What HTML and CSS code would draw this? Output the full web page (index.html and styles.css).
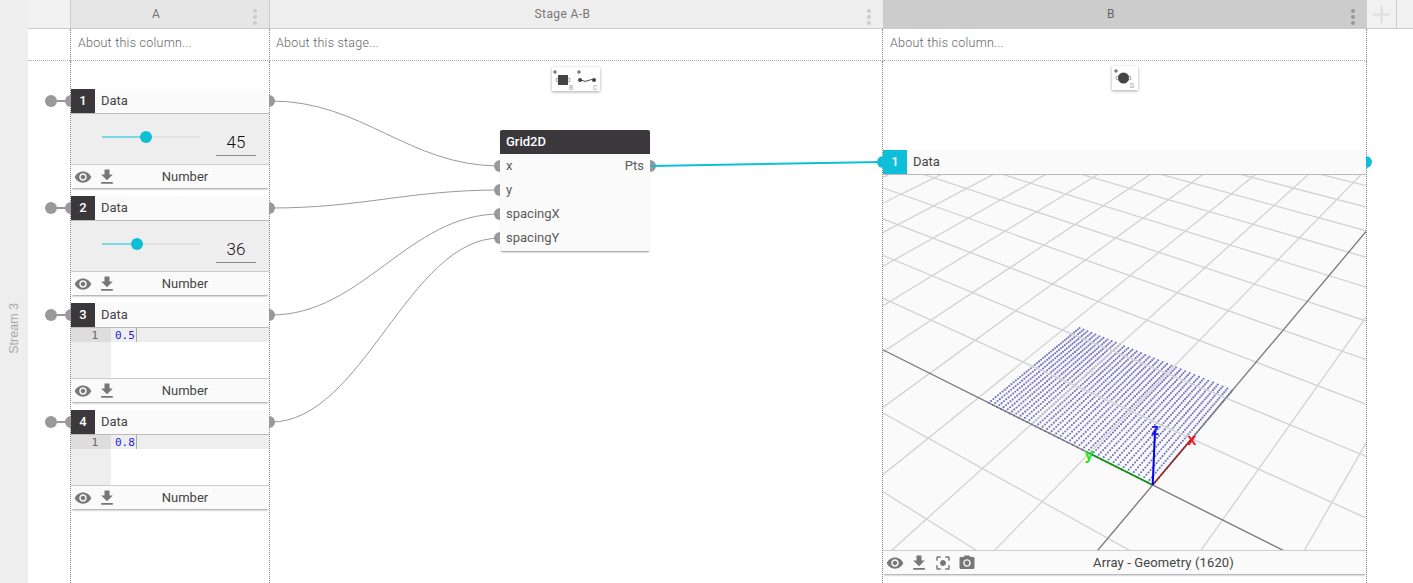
FILE: index.html
```html
<!DOCTYPE html>
<html lang="en">
<head>
<meta charset="utf-8">
<title>Stream 3</title>
<link rel="stylesheet" href="styles.css">
</head>
<body>
<svg width="0" height="0" class="defs">
  <symbol id="i-eye" viewBox="0 0 24 24"><path d="M12 4.5C7 4.5 2.73 7.61 1 12c1.73 4.39 6 7.5 11 7.5s9.27-3.11 11-7.5c-1.73-4.39-6-7.5-11-7.5zM12 17c-2.76 0-5-2.24-5-5s2.24-5 5-5 5 2.24 5 5-2.24 5-5 5zm0-8c-1.66 0-3 1.34-3 3s1.34 3 3 3 3-1.34 3-3-1.34-3-3-3z"/></symbol>
  <symbol id="i-down" viewBox="0 0 24 24"><path d="M19 9h-4V3H9v6H5l7 7 7-7zM5 18v2h14v-2H5z"/></symbol>
  <symbol id="i-focus" viewBox="0 0 24 24"><path d="M12 8c-2.21 0-4 1.79-4 4s1.79 4 4 4 4-1.79 4-4-1.79-4-4-4zm-7 7H3v4c0 1.1.9 2 2 2h4v-2H5v-4zM5 5h4V3H5c-1.1 0-2 .9-2 2v4h2V5zm14-2h-4v2h4v4h2V5c0-1.1-.9-2-2-2zm0 16h-4v2h4c1.1 0 2-.9 2-2v-4h-2v4z"/></symbol>
  <symbol id="i-cam" viewBox="0 0 24 24"><circle cx="12" cy="12" r="3.2"/><path d="M9 2L7.17 4H4c-1.1 0-2 .9-2 2v12c0 1.1.9 2 2 2h16c1.1 0 2-.9 2-2V6c0-1.1-.9-2-2-2h-3.17L15 2H9zm3 15c-2.76 0-5-2.24-5-5s2.24-5 5-5 5 2.24 5 5-2.24 5-5 5z"/></symbol>
</svg>
<div class="app">
  <aside class="stream"><span class="stream-label">Stream 3</span></aside>

  <div class="head head-gutter"></div>
  <div class="head head-a"><span class="head-title">A</span><span class="dots"><i></i><i></i><i></i></span></div>
  <div class="head head-stage"><span class="head-title">Stage A-B</span><span class="dots"><i></i><i></i><i></i></span></div>
  <div class="head head-b"><span class="head-title">B</span><span class="dots"><i></i><i></i><i></i></span></div>
  <div class="head head-plus"><svg width="17" height="17" viewBox="0 0 17 17"><path d="M7.5 0h2v7.5H17v2H9.5V17h-2V9.5H0v-2h7.5z"/></svg></div>
  <div class="head head-rest"></div>

  <div class="note note-gutter"></div>
  <div class="note note-col note-a">About this column...</div>
  <div class="note note-col note-stage">About this stage...</div>
  <div class="note note-col note-b">About this column...</div>
  <div class="note-empty"></div>
  <div class="note-empty"></div>

  <div class="body-gutter"></div>

  <section class="body body-a">
    <article class="node">
      <span class="pin"></span><span class="port port-l"></span><span class="port port-r"></span>
      <div class="node-head"><b class="badge">1</b><span class="node-title">Data</span></div>
      <div class="slider-body">
        <div class="slider"><div class="slider-fill" style="width:45%"><i class="thumb"></i></div></div>
        <div class="slider-value">45</div>
      </div>
      <div class="foot">
        <span class="foot-icon"><svg class="ic-eye"><use href="#i-eye"/></svg></span>
        <span class="foot-icon"><svg class="ic-down"><use href="#i-down"/></svg></span>
        <span class="foot-label">Number</span>
      </div>
    </article>
    <article class="node">
      <span class="pin"></span><span class="port port-l"></span><span class="port port-r"></span>
      <div class="node-head"><b class="badge">2</b><span class="node-title">Data</span></div>
      <div class="slider-body">
        <div class="slider"><div class="slider-fill" style="width:36%"><i class="thumb"></i></div></div>
        <div class="slider-value">36</div>
      </div>
      <div class="foot">
        <span class="foot-icon"><svg class="ic-eye"><use href="#i-eye"/></svg></span>
        <span class="foot-icon"><svg class="ic-down"><use href="#i-down"/></svg></span>
        <span class="foot-label">Number</span>
      </div>
    </article>
    <article class="node">
      <span class="pin"></span><span class="port port-l"></span><span class="port port-r"></span>
      <div class="node-head"><b class="badge">3</b><span class="node-title">Data</span></div>
      <div class="code-body">
        <div class="code-line"><span class="code-num">1</span><span class="code-val">0.5</span></div>
      </div>
      <div class="foot">
        <span class="foot-icon"><svg class="ic-eye"><use href="#i-eye"/></svg></span>
        <span class="foot-icon"><svg class="ic-down"><use href="#i-down"/></svg></span>
        <span class="foot-label">Number</span>
      </div>
    </article>
    <article class="node">
      <span class="pin"></span><span class="port port-l"></span><span class="port port-r"></span>
      <div class="node-head"><b class="badge">4</b><span class="node-title">Data</span></div>
      <div class="code-body">
        <div class="code-line"><span class="code-num">1</span><span class="code-val">0.8</span></div>
      </div>
      <div class="foot">
        <span class="foot-icon"><svg class="ic-eye"><use href="#i-eye"/></svg></span>
        <span class="foot-icon"><svg class="ic-down"><use href="#i-down"/></svg></span>
        <span class="foot-label">Number</span>
      </div>
    </article>
  </section>

  <section class="body body-stage">
    <div class="palette">
      <svg width="48" height="24" viewBox="0 0 48 24">
        <path class="pal-plus" d="M1 5h4M3 3v4M25 5h4M27 3v4"/>
        <circle class="pal-ring" cx="6" cy="13" r="2"/><circle class="pal-ring" cx="16" cy="13" r="2"/>
        <rect class="pal-fill" x="6" y="8" width="10" height="10"/>
        <text class="pal-text" x="17" y="23">B</text>
        <circle class="pal-fill" cx="28" cy="13" r="2"/><circle class="pal-fill" cx="42" cy="13" r="2"/>
        <path class="pal-wave" d="M28 13c3 0 4 2 7 1s4-2 7-1"/>
        <text class="pal-text" x="41" y="23">C</text>
      </svg>
    </div>
    <article class="block">
      <span class="port block-port block-p1"></span>
      <span class="port block-port block-p2"></span>
      <span class="port block-port block-p3"></span>
      <span class="port block-port block-p4"></span>
      <span class="port port-r block-out"></span>
      <div class="block-head">Grid2D</div>
      <div class="block-rows">
        <div class="block-row"><span>x</span><span>Pts</span></div>
        <div class="block-row"><span>y</span></div>
        <div class="block-row"><span>spacingX</span></div>
        <div class="block-row"><span>spacingY</span></div>
      </div>
    </article>
  </section>

  <section class="body body-b">
    <div class="palette palette-b">
      <svg width="26" height="24" viewBox="0 0 26 24">
        <path class="pal-plus" d="M2 5h4M4 3v4"/>
        <circle class="pal-ring" cx="6" cy="12" r="2"/><circle class="pal-ring" cx="17" cy="12" r="2"/>
        <ellipse class="pal-fill" cx="11.5" cy="12" rx="5.5" ry="5.5"/>
        <text class="pal-text" x="18" y="22">D</text>
      </svg>
    </div>
    <article class="node node-b">
      <span class="port port-l port-cyan"></span><span class="port port-r port-cyan"></span>
      <div class="node-head"><b class="badge badge-cyan">1</b><span class="node-title node-title-b">Data</span></div>
      <svg id="viewport" class="viewport" width="483" height="375" viewBox="883 175 483 375"></svg>
      <div class="foot">
        <span class="foot-icon"><svg class="ic-eye"><use href="#i-eye"/></svg></span>
        <span class="foot-icon"><svg class="ic-down"><use href="#i-down"/></svg></span>
        <span class="foot-icon"><svg class="ic-eye"><use href="#i-focus"/></svg></span>
        <span class="foot-icon"><svg class="ic-eye"><use href="#i-cam"/></svg></span>
        <span class="foot-label foot-label-wide">Array - Geometry (1620)</span>
      </div>
    </article>
  </section>

  <div class="body-rest"></div>
  <div class="body-rest"></div>

  <svg class="wires" width="1413" height="583" viewBox="0 0 1413 583">
    <path d="M271 101C363 101 408 166 500 166"/>
    <path d="M271 208C363 208 408 190 500 190"/>
    <path d="M271 315C363 315 408 214 500 214"/>
    <path d="M271 422C363 422 408 238 500 238"/>
    <path class="wire-on" d="M651 166L881 162"/>
  </svg>
</div>
<script src="viewport.js"></script>
</body>
</html>
```
FILE: styles.css
```css
* { box-sizing: border-box; }
html, body { margin: 0; height: 100%; background: #fff; overflow: hidden; }
body { font-family: Roboto, "Liberation Sans", sans-serif; color: #444; }
.defs { position: absolute; }

.app {
  position: relative;
  display: grid;
  grid-template-columns: 28px 42px 200px 613px 484px 30px 1fr;
  grid-template-rows: 29px 32px 1fr;
  width: 1413px;
  height: 583px;
  overflow: hidden;
}

.stream {
  grid-row: 1 / 4;
  background: #eee;
  display: flex;
  align-items: center;
  justify-content: center;
  padding-top: 73px;
}
.stream-label {
  writing-mode: vertical-rl;
  transform: rotate(180deg);
  font-family: "Liberation Sans", sans-serif;
  font-size: 12.5px;
  color: #aaa;
}

.head {
  display: flex;
  align-items: center;
  justify-content: center;
  padding: 0 28px 1px 0;
  position: relative;
  border-bottom: 1px solid #ccc;
  background: #eee;
  font-size: 12px;
  color: #777;
}
.head-gutter, .head-rest { background: #f1f1f1; }
.head-a { background: #e6e6e6; border-left: 1px solid #ccc; border-right: 1px solid #ccc; }
.head-stage { background: #eee; }
.head-b { background: #ccc; color: #666; }
.head-plus { padding: 0; border-right: 1px solid #ccc; background: #f1f1f1; }
.head-plus svg { fill: #ddd; }
.head-title { letter-spacing: 0.4px; }

.dots {
  position: absolute;
  right: 12px;
  top: 9px;
  display: flex;
  flex-direction: column;
  gap: 2px;
}
.dots i { width: 4px; height: 4px; border-radius: 50%; background: #ccc; }
.head-b .dots i { background: #999; }

.note { border-bottom: 1px dotted #aaa; }
.note-col {
  padding: 6px 0 0 7px;
  font-size: 12.5px;
  font-weight: 300;
  letter-spacing: 0.25px;
  color: #666;
  line-height: 16px;
  border-right: 1px dotted #888;
}
.note-a { border-left: 1px dotted #888; }
.note-stage { padding-left: 6px; }

.body { border-right: 1px dotted #888; position: relative; }
.body-a {
  border-left: 1px dotted #888;
  padding-top: 28px;
  display: flex;
  flex-direction: column;
  gap: 8px;
}

.node {
  position: relative;
  height: 99px;
  flex: none;
  background: #fafafa;
  box-shadow: 0 2px 2px -1px rgba(0, 0, 0, 0.4);
}
.node-head {
  height: 25px;
  display: flex;
  align-items: center;
  padding-bottom: 1px;
  background: #fafafa;
  border-bottom: 1px solid #bbb;
}
.badge {
  width: 24px;
  height: 24px;
  margin-bottom: -1px;
  background: #3a383a;
  color: #fff;
  font-size: 13px;
  font-weight: 500;
  line-height: 24px;
  text-align: center;
  flex: none;
}
.badge-cyan { background: #0fbfd8; }
.node-title { margin-left: 6px; font-size: 13px; color: #444; }

.pin {
  position: absolute;
  left: -26px;
  top: 6px;
  width: 12px;
  height: 12px;
  border-radius: 50%;
  background: #999;
}
.pin::after {
  content: "";
  position: absolute;
  left: 12px;
  top: 5px;
  width: 9px;
  height: 2px;
  background: #999;
}
.port {
  position: absolute;
  top: 6px;
  width: 6px;
  height: 12px;
  background: #999;
}
.port-l { left: -6px; border-radius: 6px 0 0 6px; }
.port-r { right: -6px; border-radius: 0 6px 6px 0; }
.port-cyan { background: #0fbfd8; }

.slider-body {
  height: 50px;
  background: #eee;
  display: flex;
  align-items: flex-start;
  padding-left: 31px;
}
.slider {
  width: 98px;
  height: 2px;
  margin-top: 22px;
  background: #e0e0e0;
}
.slider-fill { position: relative; height: 2px; background: #7dd8e6; }
.thumb {
  position: absolute;
  right: -6px;
  top: -5px;
  width: 12px;
  height: 12px;
  border-radius: 50%;
  background: #0fbfd8;
}
.slider-value {
  width: 40px;
  height: 42px;
  margin-left: 16px;
  padding-top: 16px;
  text-align: center;
  font-size: 17px;
  font-weight: 300;
  line-height: 24px;
  color: #111;
  border-bottom: 1px solid #888;
}

.code-body {
  height: 50px;
  background: linear-gradient(to right, #eee 40px, #fff 40px);
}
.code-line {
  height: 14px;
  display: flex;
  background: #eee;
  font-family: "DejaVu Sans Mono", monospace;
  font-size: 11px;
  line-height: 15px;
}
.code-num {
  width: 40px;
  padding-right: 13px;
  text-align: right;
  background: #ddd;
  color: #666;
}
.code-val {
  margin-left: 4px;
  padding-right: 1px;
  color: #22d;
  border-right: 1px solid #aaa;
}

.foot {
  height: 24px;
  display: flex;
  align-items: center;
  background: #fafafa;
  border-top: 1px solid #ccc;
}
.foot-icon {
  width: 24px;
  height: 23px;
  flex: none;
  display: flex;
  align-items: center;
  justify-content: center;
}
.foot-icon svg { fill: #777; }
.ic-eye { width: 18px; height: 18px; }
.ic-down { width: 20px; height: 20px; }
.foot-label {
  flex: 1;
  padding-right: 18px;
  text-align: center;
  font-size: 13px;
  color: #444;
}
.foot-label-wide { letter-spacing: 0.12px; }

.palette {
  width: 48px;
  height: 24px;
  margin: 6px auto 0;
  background: #fff;
  box-shadow: 0 1px 3px rgba(0, 0, 0, 0.35);
}
.palette svg { display: block; }
.palette-b { width: 26px; margin-top: 5px; }
.pal-plus { stroke: #555; stroke-width: 1; fill: none; }
.pal-ring { stroke: #888; stroke-width: 0.8; fill: none; }
.pal-fill { fill: #444; }
.pal-wave { stroke: #444; stroke-width: 1; fill: none; }
.pal-text { font-size: 6.5px; fill: #999; font-family: Roboto, sans-serif; }

.block {
  position: absolute;
  left: 230px;
  top: 69px;
  width: 150px;
  height: 121px;
  background: #fafafa;
  border-radius: 2px;
  box-shadow: 0 2px 2px -1px rgba(0, 0, 0, 0.45);
}
.block-head {
  height: 24px;
  padding-left: 6px;
  background: #3a383a;
  border-radius: 2px 2px 0 0;
  color: #fff;
  font-size: 13px;
  font-weight: 500;
  line-height: 24px;
}
.block-rows { display: flex; flex-direction: column; }
.block-row {
  height: 24px;
  padding: 0 6px;
  display: flex;
  justify-content: space-between;
  font-size: 13px;
  line-height: 24px;
  color: #5a5a5a;
}
.block-port { left: -6px; border-radius: 6px 0 0 6px; }
.block-p1 { top: 30px; }
.block-p2 { top: 54px; }
.block-p3 { top: 78px; }
.block-p4 { top: 102px; }
.block-out { top: 30px; }

.node-b { margin: 60px 0 0; height: 424px; }
.node-title-b { margin-left: 6px; }
.viewport { display: block; background: #fafafa; }

.wires {
  position: absolute;
  left: 0;
  top: 0;
  pointer-events: none;
  fill: none;
  stroke: #999;
  stroke-width: 1;
}
.wires .wire-on { stroke: #0fbfd8; stroke-width: 2; }

.grid-line { stroke: #d2d2d2; stroke-width: 1.3; }
.axis-line { stroke: #777; stroke-width: 1.3; }
.axis-x { stroke: #a02828; stroke-width: 1.5; }
.axis-y { stroke: #0a9a0a; stroke-width: 1.5; }
.axis-z { stroke: #0000f0; stroke-width: 2; }
.point { fill: #5a5ab8; opacity: 0.85; }
.axis-label { font-family: "Liberation Sans", sans-serif; font-weight: 700; font-size: 16px; text-anchor: middle; }
.label-x { fill: #f01818; }
.label-y { fill: #18e818; }
.label-z { fill: #1818f0; }
```
FILE: viewport.js
```js
(function () {
  var NS = 'http://www.w3.org/2000/svg';
  var svg = document.getElementById('viewport');

  // Ground plane (grid units) to screen pixels.
  function project(u, v) {
    var w = 1 + 0.07 * u + 0.048 * v;
    return [(1152.7 + 122.4 * u - 11.1 * v) / w, (485 - 15.6 * u - 10 * v) / w];
  }
  function add(name, attrs, parent) {
    var el = document.createElementNS(NS, name);
    for (var k in attrs) el.setAttribute(k, attrs[k]);
    (parent || svg).appendChild(el);
    return el;
  }
  function line(a, b, cls) {
    add('line', { x1: a[0], y1: a[1], x2: b[0], y2: b[1], 'class': cls });
  }

  // 45 x 36 = 1620 points: x at 0.5 spacing, y at 0.8 spacing, 10 to a grid cell.
  for (var i = 0; i < 45; i++) {
    for (var j = 0; j < 36; j++) {
      var p = project(i * 0.05, j * 0.08);
      add('circle', { cx: p[0], cy: p[1], r: 1.05, 'class': 'point' });
    }
  }

  var lo = -7, hi = 20;
  for (var n = lo; n <= hi; n++) {
    if (n === 0) continue;
    line(project(n, lo), project(n, hi), 'grid-line');
    line(project(lo, n), project(hi, n), 'grid-line');
  }
  line(project(0, lo), project(0, hi), 'axis-line');
  line(project(lo, 0), project(hi, 0), 'axis-line');

  line(project(0, 0), project(1, 0), 'axis-x');
  line(project(0, 0), project(0, 1), 'axis-y');
  line(project(0, 0), [1155, 431], 'axis-z');

  [['x', 1192, 444.5], ['y', 1089, 459.5], ['z', 1155, 434.5]].forEach(function (l) {
    add('text', { x: l[1], y: l[2], 'class': 'axis-label label-' + l[0] }).textContent = l[0];
  });
})();
```
